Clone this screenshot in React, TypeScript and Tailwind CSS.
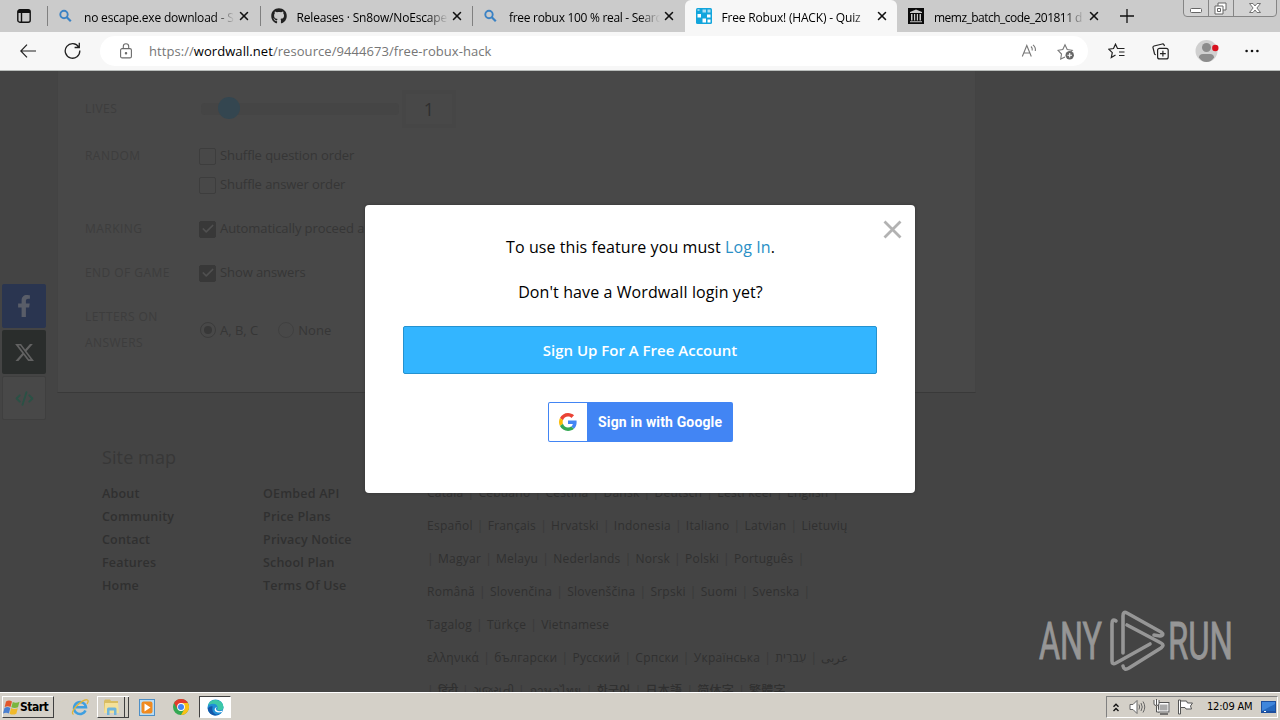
import type { ReactNode } from "react";
import clsx from "clsx";
import { Check, CodeXml, X } from "lucide-react";
import { FaFacebookF, FaGithub } from "react-icons/fa";
import { FaXTwitter } from "react-icons/fa6";

interface TabProps {
	icon: ReactNode;
	title: string;
	active?: boolean;
	divider?: boolean;
	textClass?: string;
}

const SearchIcon = () => (
	<svg width="16" height="16" viewBox="0 0 16 16" fill="none" stroke="#3b82c4" strokeWidth="1.9">
		<circle cx="6" cy="6.5" r="3.7" />
		<path d="M8.8 9.3l4 4" strokeWidth="2.2" />
	</svg>
);

const WordwallIcon = () => (
	<svg width="16" height="16" viewBox="0 0 16 16">
		<rect width="16" height="16" rx="1.5" fill="#12a5dc" />
		<path d="M6.500 1.500h3.500v3H6.500zM11.500 1.500h3v3h-3z" fill="#a9def3" />
		<path d="M1.500 6h3.500v3.500H1.500zM11 6.500h3.500v3H11zM6.500 10.500H10v4H6.500zM1.500 1.500h2v1h-2zM11.500 11.500h3v3h-3z" fill="#fff" />
	</svg>
);

const ArchiveIcon = () => (
	<svg width="16" height="16" viewBox="0 0 16 16">
		<rect width="16" height="16" fill="#0a0a0a" />
		<path d="M8 1.500L14 4v1H2V4zM3 6h1.500v6.500H3zM6 6h1.200v6.500H6zM8.800 6H10v6.500H8.800zM11.500 6H13v6.500h-1.500zM2 13.300h12v1H2z" fill="#c9c9c9" />
	</svg>
);

const Tab: React.FC<TabProps> = ({ icon, title, active, divider, textClass }) => (
	<div
		className={clsx(
			"relative flex h-8 w-[212.5px] shrink-0 items-center pl-[11px]",
			active ? "rounded-t-md bg-[#f7f7f7]" : "bg-[#cbcbcb]",
		)}
	>
		{divider && <div className="absolute left-0 top-1.5 h-5 w-px bg-[#808080]" />}
		<div className="w-4 shrink-0">{icon}</div>
		<div className="ml-[10px] w-[153px] whitespace-nowrap [mask-image:linear-gradient(to_right,#000_130px,transparent_151px)]">
			<span className={clsx("text-[12px]", textClass)}>{title}</span>
		</div>
		<X className="h-[14px] w-[14px] shrink-0 text-[#111]" strokeWidth={2.6} />
	</div>
);

const WindowButtons = () => (
	<svg className="absolute right-[3px] top-0" width="94" height="17" viewBox="0 0 94 17" fill="none">
		<path d="M.5 0v13q0 3.500 3.500 3.500h86q3.500 0 3.500-3.500V0" fill="#d2d2d2" stroke="#858585" />
		<path d="M25.500 0v16M50.500 0v16" stroke="#858585" />
		<rect x="7.500" y="8.500" width="11" height="4" rx="1" fill="#fff" stroke="#666" />
		<path d="M35 3h8v7h-8z" fill="#fff" stroke="#666" />
		<path d="M32 6h8v8h-8z" fill="#fff" stroke="#666" />
		<path d="M34.500 8.500h3v3h-3z" stroke="#666" />
		<path d="M66.500 3.500h3.500l2 2.500 2-2.500h3.500l-3.600 4.500 3.600 4.500H74l-2-2.500-2 2.500h-3.500L70.100 8z" fill="#fff" stroke="#666" strokeWidth=".9" />
	</svg>
);

const TabStrip = () => (
	<div className="relative flex h-8 bg-[#cbcbcb]">
		<div className="flex w-[47px] items-center pl-[17px]">
			<svg width="14" height="14" viewBox="0 0 14 14" fill="none" stroke="#111" strokeWidth="1.400">
				<rect x=".8" y=".8" width="12.400" height="12.400" rx="2" />
				<path d="M1 2.500h12" strokeWidth="3" />
				<path d="M4.500 3v10" />
			</svg>
		</div>
		<Tab icon={<SearchIcon />} title="no escape.exe download - S" divider textClass="tracking-[-0.2px]" />
		<Tab icon={<FaGithub size={16} color="#222" />} title="Releases · Sn8ow/NoEscape" divider textClass="tracking-[-0.18px]" />
		<Tab icon={<SearchIcon />} title="free robux 100 % real - Searc" divider textClass="tracking-[-0.3px]" />
		<Tab icon={<WordwallIcon />} title="Free Robux! (HACK) - Quiz" active textClass="tracking-[-0.18px]" />
		<Tab icon={<ArchiveIcon />} title="memz_batch_code_201811 d" textClass="tracking-[-0.52px]" />
		<div className="flex items-center">
			<div className="-ml-px -mt-px h-5 w-px bg-[#808080]" />
			<svg className="ml-[10px]" width="14" height="14" viewBox="0 0 14 14" stroke="#111" strokeWidth="1.300">
				<path d="M7 0v14M0 7h14" />
			</svg>
		</div>
		<WindowButtons />
	</div>
);

const Toolbar = () => (
	<div className="flex h-[39px] items-center border-b border-[#b9bdbb] bg-[#f7f7f7]">
		<svg className="ml-5" width="16" height="14" viewBox="0 0 16 14" fill="none" stroke="#222" strokeWidth="1.200">
			<path d="M7 .7L.8 7 7 13.300M.8 7H16" />
		</svg>
		<svg className="-mt-px ml-7" width="17" height="17" viewBox="0 0 17 17" fill="none" stroke="#222" strokeWidth="1.300">
			<path d="M14.800 5.200A7.300 7.300 0 1 0 15.800 8.500M15.300 .8v4.700h-4.700" />
		</svg>
		<div className="ml-[19px] flex h-[30px] w-[988px] items-center rounded-full bg-white pl-5">
			<svg width="12" height="16" viewBox="0 0 12 16" fill="none" stroke="#6b6b6b" strokeWidth="1.100">
				<rect x=".6" y="5.600" width="10.800" height="9.300" rx="1.500" />
				<path d="M3.300 5.500V3.400a2.700 2.700 0 0 1 5.400 0v2.100" />
				<circle cx="6" cy="10.200" r=".7" fill="#6b6b6b" />
			</svg>
			<div className="ml-[17px] mt-px text-[13px] tracking-[0.06px] text-[#767676]">
				https://<span className="text-black">wordwall.net</span>/resource/9444673/free-robux-hack
			</div>
			<div className="ml-auto mr-[13px] flex items-center gap-5">
				<svg width="16" height="16" viewBox="0 0 16 16" fill="none" stroke="#777" strokeWidth="1.100">
					<path d="M1.300 13.500L5.800 2.500l4.500 11M2.800 10h6M10 3.500q1.700 1.600 1.200 4M12 1.800q3 2.600 2.300 6.200" />
				</svg>
				<svg width="18" height="17" viewBox="0 0 18 17" fill="none" stroke="#777" strokeWidth="1.100">
					<path d="M8 14l-4.300 2 .8-5L1 7.300l4.800-.7L8 1.800l2.200 4.800 5 .7-1.200 1.200" />
					<circle cx="12.700" cy="12.300" r="4.200" fill="#666" stroke="none" />
					<path d="M12.700 10v4.600M10.400 12.300H15" stroke="#fff" />
				</svg>
			</div>
		</div>
		<svg className="ml-[20px]" width="17" height="16" viewBox="0 0 17 16" fill="none" stroke="#222" strokeWidth="1.200">
			<path d="M7.500 12L3.300 14.500l1-4.800L.8 6.200l4.700-.7L7.500 1.200l2 4.300h7M11 9h5.500M11 12.500h5.500" />
		</svg>
		<svg className="ml-[27px]" width="17" height="17" viewBox="0 0 17 17" fill="none" stroke="#222" strokeWidth="1.200">
			<path d="M12.500 3L12 1.800Q11.500.8 10.300 1L2 3Q.7 3.400 1 4.700l1.500 6q.4 1 1.300 1" />
			<rect x="5.600" y="5.300" width="10.600" height="10.600" rx="2" />
			<path d="M10.900 7.700v5.800M8 10.600h5.800" />
		</svg>
		<svg className="ml-[26px]" width="24" height="22" viewBox="0 0 24 22">
			<circle cx="11.500" cy="11" r="11" fill="#d0d0d0" />
			<circle cx="11.500" cy="7.500" r="4.500" fill="#8c8c8c" />
			<path d="M4 17.500q0-3.500 4-3.500h7q4 0 4 3.500Q16 22 11.500 22T4 17.500z" fill="#8c8c8c" />
			<circle cx="20.300" cy="8" r="3.200" fill="#d9121f" />
		</svg>
		<svg className="ml-[26px]" width="14" height="4" viewBox="0 0 14 4" fill="#111">
			<circle cx="1.600" cy="2" r="1.300" />
			<circle cx="7" cy="2" r="1.300" />
			<circle cx="12.400" cy="2" r="1.300" />
		</svg>
	</div>
);

const Checkbox: React.FC<{ label: string; checked?: boolean }> = ({ label, checked }) => (
	<div className="flex items-center gap-[4px] whitespace-nowrap text-[#363636]">
		<div
			className={clsx(
				"flex h-[17px] w-[17px] shrink-0 items-center justify-center rounded-[2px] border",
				checked ? "border-[#383838] bg-[#383838] text-[#505050]" : "border-[#3d3d3d]",
			)}
		>
			{checked && <Check className="h-3.5 w-3.5" strokeWidth={3} />}
		</div>
		<span className="text-[13px] tracking-[-0.08px]">{label}</span>
	</div>
);

const Radio: React.FC<{ label: string; checked?: boolean }> = ({ label, checked }) => (
	<div className="flex items-center gap-1 text-[13px] text-[#363636]">
		<div
			className={clsx(
				"flex h-4 w-4 items-center justify-center rounded-full border",
				checked ? "border-[#3b3b3b]" : "border-[#404040]",
			)}
		>
			{checked && <div className="h-2 w-2 rounded-full bg-[#383838]" />}
		</div>
		{label}
	</div>
);

const OptionLabel: React.FC<{ children: ReactNode }> = ({ children }) => (
	<div className="w-[114px] shrink-0 text-[12px] tracking-[0.45px] text-[#3d3d3d]">{children}</div>
);

const Options = () => (
	<div className="h-[322px] w-[919px] border-x border-b border-b-[#393939] border-x-[#434343] bg-[#484848] pl-[27px]">
		<div className="flex h-[76px] items-center">
			<OptionLabel>LIVES</OptionLabel>
			<div className="relative ml-[2px] h-3 w-[198px] rounded bg-[#454545]">
				<div className="absolute -top-[6px] left-[17px] h-[22px] w-[22px] rounded-full bg-[#344650]" />
			</div>
			<div className="ml-[3px] flex h-[38px] w-[54px] items-center justify-center border-4 border-[#464646] text-[18px] text-[#2f2f2f]">
				1
			</div>
		</div>
		<div className="flex h-[18px] items-center">
			<OptionLabel>RANDOM</OptionLabel>
			<Checkbox label="Shuffle question order" />
		</div>
		<div className="ml-[114px] mt-[11px] flex h-[18px] items-center">
			<Checkbox label="Shuffle answer order" />
		</div>
		<div className="mt-[26px] flex h-[18px] items-center">
			<OptionLabel>MARKING</OptionLabel>
			<Checkbox label="Automatically proceed a" checked />
		</div>
		<div className="mt-[26px] flex h-[18px] items-center">
			<OptionLabel>END OF GAME</OptionLabel>
			<Checkbox label="Show answers" checked />
		</div>
		<div className="mt-[22px] flex h-[52px] items-center leading-[26px]">
			<OptionLabel>
				LETTERS ON
				<br />
				ANSWERS
			</OptionLabel>
			<div className="ml-[1px] flex gap-5">
				<Radio label="A, B, C" checked />
				<Radio label="None" />
			</div>
		</div>
	</div>
);

const ShareButtons = () => (
	<div className="flex w-[57px] flex-col gap-[2px] pl-[2px] pt-[213px]">
		<div className="flex h-11 w-11 items-center justify-center rounded-[2px] bg-[#2a3550]">
			<FaFacebookF size={22} color="#595d68" />
		</div>
		<div className="flex h-11 w-11 items-center justify-center rounded-[2px] bg-[#2a2d2c]">
			<FaXTwitter size={21} color="#626262" />
		</div>
		<div className="flex h-11 w-11 items-center justify-center rounded-[2px] border border-[#3f3f3f] bg-[#484848]">
			<CodeXml size={19} color="#2a5145" strokeWidth={2.4} />
		</div>
	</div>
);

const languageRows: { lead?: boolean; trail?: boolean; items: string[] }[] = [
	{ trail: true, items: ["Català", "Cebuano", "Čeština", "Dansk", "Deutsch", "Eesti keel", "English"] },
	{ items: ["Español", "Français", "Hrvatski", "Indonesia", "Italiano", "Latvian", "Lietuvių"] },
	{ lead: true, trail: true, items: ["Magyar", "Melayu", "Nederlands", "Norsk", "Polski", "Português"] },
	{ trail: true, items: ["Română", "Slovenčina", "Slovenščina", "Srpski", "Suomi", "Svenska"] },
	{ items: ["Tagalog", "Türkçe", "Vietnamese"] },
	{ items: ["ελληνικά", "български", "Русский", "Српски", "Українська", "עִברִית", "عربى"] },
	{ lead: true, items: ["हिंदी", "ગુજરાતી", "ภาษาไทย", "한국어", "日本語", "简体字", "繁體字"] },
];

const Divider = () => <span className="w-[15px] shrink-0 text-center text-[#393939]">|</span>;

const Footer = () => (
	<div className="flex pl-[102px] pt-[25px] text-[#303030]">
		<div className="w-[325px]">
			<div className="text-[18px] leading-6 tracking-[0.1px] text-[#373737]">Site map</div>
			<div className="mt-[13px] flex text-[12.500px] font-semibold leading-[23px] tracking-[0.2px]">
				<div className="w-[161px]">
					<div>About</div>
					<div>Community</div>
					<div>Contact</div>
					<div>Features</div>
					<div>Home</div>
				</div>
				<div>
					<div>OEmbed API</div>
					<div>Price Plans</div>
					<div>Privacy Notice</div>
					<div>School Plan</div>
					<div>Terms Of Use</div>
				</div>
			</div>
		</div>
		<div className="pt-[31px] text-[12px] font-medium leading-[33px] tracking-[0.25px]">
			{languageRows.map((row) => (
				<div key={row.items[0]} className="flex h-[33px] whitespace-nowrap">
					{row.lead && <span className="w-[11px] text-[#393939]">|</span>}
					{row.items.map((name, i) => (
						<div key={name} className="flex">
							{i > 0 && <Divider />}
							<span>{name}</span>
						</div>
					))}
					{row.trail && <Divider />}
				</div>
			))}
		</div>
	</div>
);

const GoogleIcon = () => (
	<svg width="18" height="18" viewBox="0 0 48 48">
		<path fill="#EA4335" d="M24 9.500c3.540 0 6.710 1.220 9.210 3.600l6.850-6.850C35.900 2.380 30.470 0 24 0 14.620 0 6.510 5.380 2.560 13.220l7.980 6.190C12.430 13.720 17.740 9.500 24 9.500z" />
		<path fill="#4285F4" d="M46.980 24.550c0-1.570-.15-3.090-.38-4.550H24v9.020h12.940c-.58 2.960-2.260 5.480-4.780 7.180l7.730 6c4.510-4.180 7.090-10.360 7.090-17.650z" />
		<path fill="#FBBC05" d="M10.530 28.590c-.48-1.450-.76-2.990-.76-4.590s.27-3.140.76-4.590l-7.980-6.190C.92 16.460 0 20.120 0 24c0 3.880.92 7.540 2.560 10.780l7.970-6.190z" />
		<path fill="#34A853" d="M24 48c6.480 0 11.930-2.130 15.890-5.810l-7.730-6c-2.150 1.450-4.920 2.300-8.160 2.300-6.260 0-11.570-4.220-13.470-9.910l-7.980 6.190C6.510 42.620 14.620 48 24 48z" />
	</svg>
);

const LoginModal = () => (
	<div className="absolute left-[365px] top-[134px] h-[288px] w-[550px] rounded-[4px] bg-white px-[38px] pt-[31px] text-center text-black shadow-[0_0_3px_#333]">
		<svg className="absolute right-[13px] top-[15px]" width="19" height="19" viewBox="0 0 19 19" stroke="#b2b2b2" strokeWidth="2.800">
			<path d="M1.500 1.500l16 16M17.500 1.500l-16 16" />
		</svg>
		<div className="pl-px text-[16px] leading-[22px] tracking-[0.08px]">
			To use this feature you must <span className="text-[#2a8fc6]">Log In</span>.
		</div>
		<div className="mt-[23px] pl-px text-[16px] leading-[22px] tracking-[0.1px]">Don't have a Wordwall login yet?</div>
		<button className="mt-[23px] block h-12 w-full rounded-[2px] border border-[#2492d0] bg-[#33b5ff] text-[15px] font-semibold text-white">
			Sign Up For A Free Account
		</button>
		<button className="ml-[145px] mt-7 flex h-10 w-[185px] items-center rounded-[2px] bg-[#4285f4] p-px font-['Roboto',sans-serif] text-[14px] font-bold tracking-[0.15px] text-white">
			<div className="flex h-[38px] w-[38px] items-center justify-center rounded-l-[1px] bg-white">
				<GoogleIcon />
			</div>
			<span className="ml-[11px] whitespace-nowrap">Sign in with Google</span>
		</button>
	</div>
);

const Watermark = () => (
	<svg className="absolute left-[1036px] top-[536px]" width="200" height="68" viewBox="0 0 200 68" fill="none">
		<g fill="#969696" stroke="#969696" strokeWidth=".9" fontFamily="Roboto, sans-serif" fontSize="51">
			<text x="3" y="52" textLength="63" lengthAdjust="spacingAndGlyphs">ANY</text>
			<text x="132" y="52" textLength="65" lengthAdjust="spacingAndGlyphs">RUN</text>
		</g>
		<g stroke="#969696" strokeWidth="3.600" strokeLinejoin="round" strokeLinecap="round">
			<path d="M80 14q-4-3-4 3v37q0 4 4 2l34-19" />
			<path d="M87 46V9q0-5 4-3l34 19q4 3-1 4l-6-1" />
			<path d="M91 18l34 18q4 2 0 5L93 61q-5 3-6-2" />
		</g>
	</svg>
);

const StartFlag = () => (
	<svg width="17" height="17" viewBox="0 0 17 17">
		<path d="M3 2.500q3-2 6 0L7.500 8Q5 6.500 1.700 8z" fill="#e2572b" />
		<path d="M9.800 2.900q3 1.600 6.700-.2L15 8.300q-3.500 1.500-6.700-.1z" fill="#7ab63f" />
		<path d="M1.500 8.900q3-1.600 5.800 0L5.900 14.400Q3 12.900 0 14.500z" fill="#4a7fd0" />
		<path d="M8.100 9.100q3 1.700 6.700.1l-1.500 5.500q-3.700 1.700-6.700 0z" fill="#f0b92b" />
	</svg>
);

const IeIcon = () => (
	<svg width="18" height="18" viewBox="0 0 18 18" fill="none">
		<path d="M14.500 12.500A6 6 0 1 1 15 9.300H5" stroke="#3f9fe0" strokeWidth="2.500" />
		<path d="M2.500 16.500Q-.5 15 5 8.500 13 .5 16.500 2q1.500 1-.5 4" stroke="#e0b53a" strokeWidth="1.300" />
	</svg>
);

const FolderIcon = () => (
	<svg width="19" height="18" viewBox="0 0 19 18">
		<path d="M2 3l1-1.500h5L9 3h7v12H2z" fill="#d9bd62" />
		<path d="M3 5h13l1 10H2z" fill="#f4e19a" />
		<path d="M5 17v-6q0-1.500 1.500-1.500h6.500q1.500 0 1.500 1.500v6H12v-4.500H7.500V17z" fill="#6fb5dc" />
	</svg>
);

const MediaIcon = () => (
	<svg width="16" height="17" viewBox="0 0 16 17">
		<rect x=".5" y=".5" width="15" height="16" fill="#b8dcf5" stroke="#4e8fc6" />
		<rect x="2.500" y="2.500" width="11" height="12" rx="2" fill="#f08a20" />
		<path d="M5.500 4.500l6 4-6 4z" fill="#fff" />
	</svg>
);

const ChromeIcon = () => (
	<svg width="16" height="16" viewBox="0 0 16 16">
		<circle cx="8" cy="8" r="8" fill="#34a853" />
		<path d="M1.070 4A8 8 0 0 1 14.930 4H8L4.540 10z" fill="#e33b2e" />
		<path d="M14.930 4A8 8 0 0 1 8 16l3.460-6L8 4z" fill="#fbc116" />
		<circle cx="8" cy="8" r="3.900" fill="#fff" />
		<circle cx="8" cy="8" r="3" fill="#4285f4" />
	</svg>
);

const EdgeIcon = () => (
	<svg width="17" height="17" viewBox="0 0 17 17">
		<circle cx="8.500" cy="8.500" r="8" fill="#1f8fd6" />
		<path d="M1 6.500A8 8 0 0 1 16.500 8q.2 3.200-3.800 3.300-3 0-2.200-1.500Q11.200 6.500 8 5 4 4 1 6.500z" fill="#3cc8a8" />
		<path d="M5.800 7.500Q4 12 8 15q3 1.500 6-.8-3 3-7.500 2.100Q1.500 14.500 .6 9.500 3 6.500 5.800 7.500z" fill="#1557a8" />
		<path d="M9.800 8q-1.800 1.800-.3 3.300 2.500 1.800 6.200.2l-.8 1.600q-4 1.200-6.700-.9Q6.500 9.500 9.800 8z" fill="#fff" />
	</svg>
);

const Taskbar = () => (
	<div className="flex h-7 items-center border-t border-white bg-[#d4d0c8] pt-px">
		<div className="ml-[2px] flex h-[22px] w-[52px] items-center border border-b-[#404040] border-l-white border-r-[#404040] border-t-white font-['DejaVu_Sans_Condensed','DejaVu_Sans',sans-serif] text-[12px] font-bold tracking-[-0.5px] text-black">
			<StartFlag />
			<span>Start</span>
		</div>
		<div className="ml-[17px]">
			<IeIcon />
		</div>
		<div className="ml-[8px] flex h-[22px] w-[32px] border-y border-l border-b-[#404040] border-l-white border-t-white">
			<div className="flex w-[27px] items-center justify-center border-r border-[#404040]">
				<FolderIcon />
			</div>
			<div className="w-[4px] border-r border-[#404040]" />
		</div>
		<div className="ml-[10px]">
			<MediaIcon />
		</div>
		<div className="ml-[18px]">
			<ChromeIcon />
		</div>
		<div className="ml-[10px] flex h-[22px] w-[32px] items-center justify-center border border-b-white border-l-[#404040] border-r-white border-t-[#404040] bg-white">
			<EdgeIcon />
		</div>
		<div className="ml-auto mr-[2px] flex h-[22px] w-[172px] items-center border border-b-white border-l-[#808080] border-r-white border-t-[#808080]">
			<svg className="ml-[6px]" width="6" height="9" viewBox="0 0 6 9" fill="none" stroke="#111" strokeWidth="1.400">
				<path d="M.5 3.700L3 1.200l2.500 2.500M.5 8L3 5.500 5.500 8" />
			</svg>
			<svg className="ml-[10px]" width="17" height="16" viewBox="0 0 17 16" fill="none" stroke="#666">
				<path d="M1 5.500h3l4-4v13l-4-4H1z" fill="#fff" />
				<path d="M10 5.500q1.300 2.500 0 5M12 4q2.500 4 0 8M14 2.500q3.500 5.500 0 11" />
			</svg>
			<svg className="ml-[7px]" width="17" height="16" viewBox="0 0 17 16" fill="none" stroke="#555">
				<rect x="5.500" y="4.500" width="10" height="8" fill="#aaa" stroke="#fff" strokeWidth="2" />
				<rect x="5.500" y="3.500" width="10.500" height="9.500" />
				<path d="M7 15h8" strokeWidth="1.500" />
				<path d="M1 1v4q0 1.500 2.500 1.500T6 5V1M3.500 0v6M3.500 7v6h3" fill="#fff" />
			</svg>
			<svg className="ml-[7px]" width="17" height="16" viewBox="0 0 17 16" fill="#fff" stroke="#555">
				<path d="M1.500 1h2v14h-2z" />
				<path d="M3.500 2h6l1 2h5l-2 3 1 3H9L8 8.500H3.500z" />
			</svg>
			<span className="ml-[13px] mt-px whitespace-nowrap font-['DejaVu_Sans_Condensed','DejaVu_Sans',sans-serif] text-[11px] tracking-[-0.2px] text-black">12:09 AM</span>
			<svg className="ml-auto mr-px" width="15" height="13" viewBox="0 0 15 13">
				<rect width="15" height="12" fill="#1d4f9e" />
				<path d="M1 1h13v9H1z" fill="#3f86dc" />
				<path d="M1 10L14 3v7z" fill="#2467bd" />
				<path d="M3 10.500h2" stroke="#fff" />
			</svg>
		</div>
	</div>
);

const App = () => (
	<div className="flex h-[720px] w-[1280px] flex-col overflow-hidden bg-[#444] font-['Open_Sans','Noto_Sans','Noto_Sans_CJK_SC',sans-serif] text-black">
		<TabStrip />
		<Toolbar />
		<div className="relative h-[621px] overflow-hidden bg-[#444]">
			<div className="flex">
				<ShareButtons />
				<Options />
			</div>
			<Footer />
			<LoginModal />
			<Watermark />
		</div>
		<Taskbar />
	</div>
);

export default App;
